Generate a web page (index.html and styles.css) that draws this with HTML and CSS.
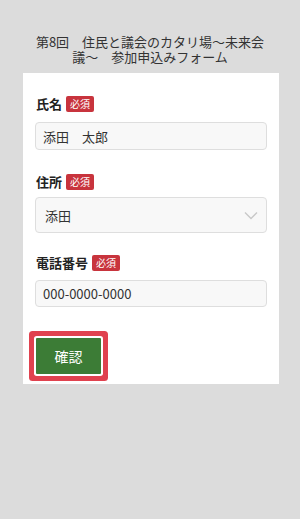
FILE: index.html
```html
<!DOCTYPE html>
<html lang="ja">
<head>
<meta charset="utf-8">
<link rel="stylesheet" href="styles.css">
</head>
<body>
<h1 class="title">第8回　住民と議会のカタリ場〜未来会議〜　参加申込みフォーム</h1>
<form class="card">
  <div class="field">
    <div class="label">氏名<span class="badge">必須</span></div>
    <div class="input">添田　太郎</div>
  </div>
  <div class="field field-select">
    <div class="label">住所<span class="badge">必須</span></div>
    <div class="input select">添田
      <svg class="chev" width="14" height="9" viewBox="0 0 14 9"><path d="M1 1.5 L7 7.5 L13 1.5" fill="none" stroke="#c8c8c8" stroke-width="1.3"/></svg>
    </div>
  </div>
  <div class="field field-last">
    <div class="label">電話番号<span class="badge">必須</span></div>
    <div class="input">000-0000-0000</div>
  </div>
  <div class="actions">
    <button type="button" class="btn">確認</button>
  </div>
</form>
</body>
</html>
```

FILE: styles.css
```css
* { box-sizing: border-box; }
html, body {
  margin: 0;
  padding: 0;
  background: #dcdcdc;
  font-family: "Noto Sans CJK JP", "Noto Sans", sans-serif;
  color: #333;
}
.title {
  margin: 0;
  padding: 34px 34px 0;
  font-size: 13px;
  font-weight: normal;
  line-height: 15px;
  text-align: center;
  color: #333;
}
.card {
  margin: 9px 21px 0 23px;
  background: #fff;
  padding: 22px 12px 10px 12px;
  display: flex;
  flex-direction: column;
}
.field {
  display: flex;
  flex-direction: column;
  margin-bottom: 23px;
}
.field-select { margin-bottom: 21px; }
.field-last { margin-bottom: 31px; }
.label {
  display: flex;
  align-items: center;
  font-size: 13px;
  font-weight: bold;
  line-height: 17px;
  height: 17px;
  color: #222;
  padding-left: 1px;
  margin-bottom: 10px;
}
.field-select .label { margin-bottom: 7px; }
.field-last .label { margin-bottom: 9px; }
.badge {
  margin-left: 4px;
  background: #c8343d;
  color: #fff;
  font-size: 10px;
  font-weight: normal;
  line-height: 16px;
  height: 16px;
  padding: 0 4px;
  border-radius: 2px;
}
.input {
  height: 28px;
  border: 1px solid #dedede;
  border-radius: 4px;
  background: #f8f8f8;
  font-size: 13px;
  padding: 0 7px;
  color: #333;
  display: flex;
  align-items: center;
}
.field-last .input { height: 27px; }
.select {
  height: 36px;
  padding-left: 9px;
  justify-content: space-between;
}
.chev {
  margin-right: 1px;
}
.actions {
  display: flex;
  padding-left: 1px;
}
.btn {
  width: 65px;
  height: 36px;
  margin: 0;
  border: none;
  background: #3c7c36;
  color: #fff;
  font-family: "Noto Sans CJK JP", sans-serif;
  font-size: 14px;
  box-shadow: 0 0 0 2px #fff, 0 0 0 7px #e0424f;
  border-radius: 1px;
}
```
